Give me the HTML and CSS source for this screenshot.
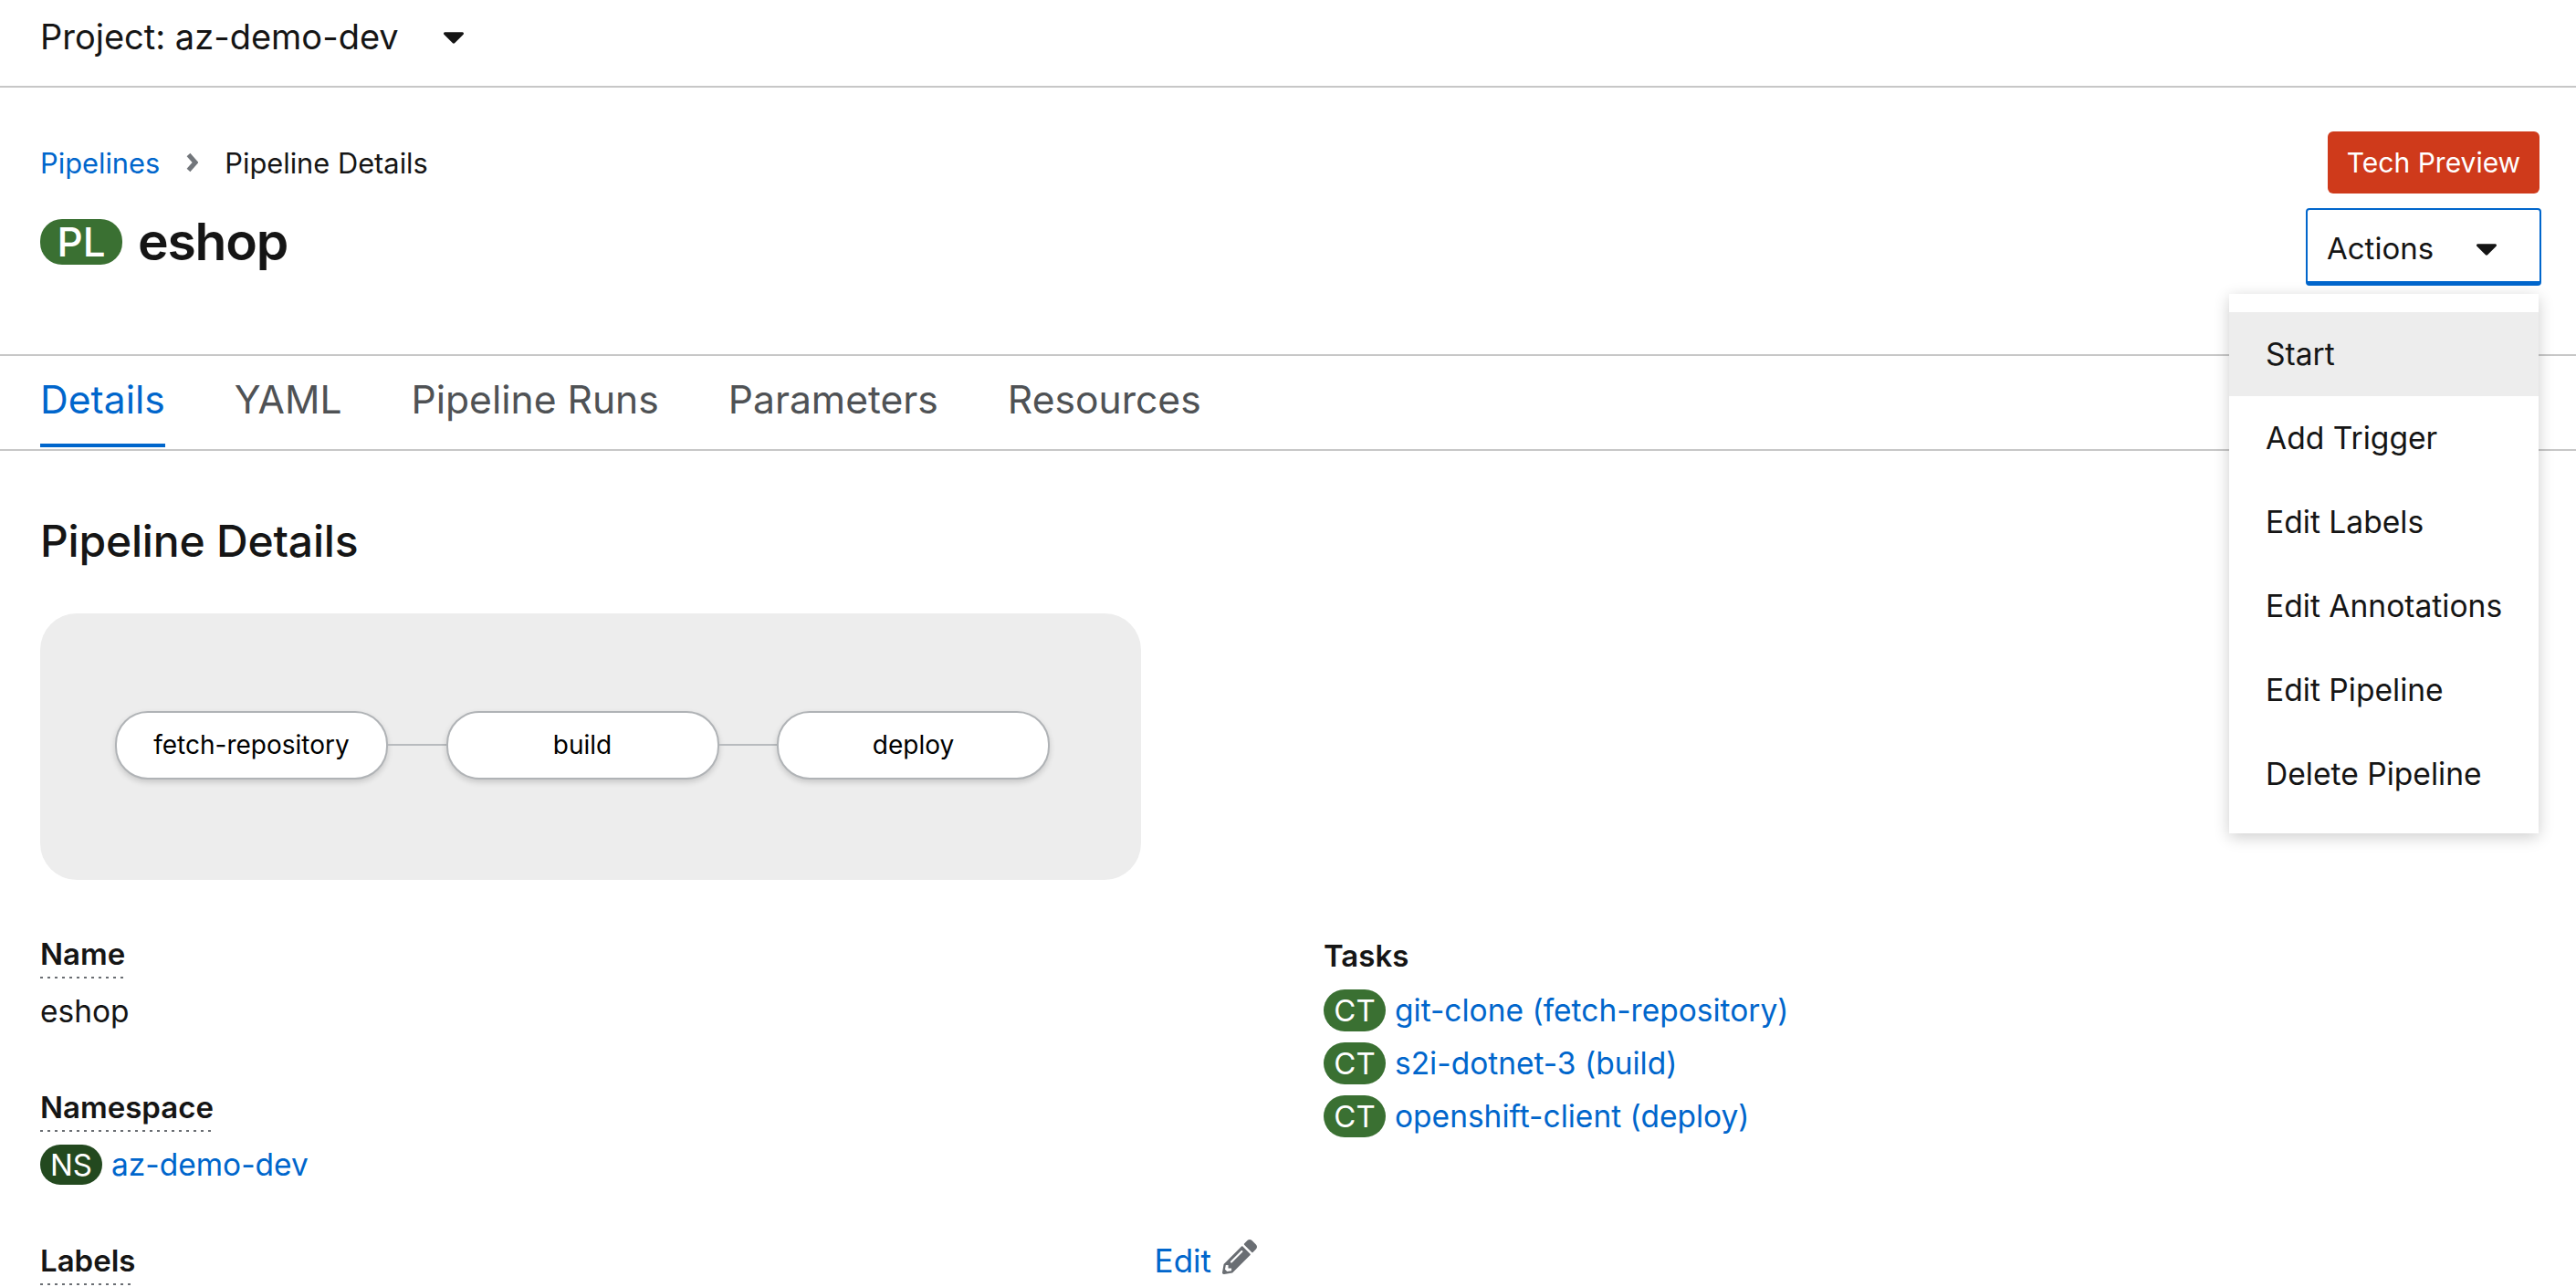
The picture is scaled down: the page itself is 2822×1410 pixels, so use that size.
FILE: index.html
```html
<!DOCTYPE html>
<html lang="en">
<head>
    <meta charset="UTF-8">
    <title>Pipeline Details</title>
    <link rel="stylesheet" href="styles.css">
</head>
<body>
    <div class="project-bar">
        <span>Project: az-demo-dev</span>
        <svg class="caret" viewBox="0 0 320 512"><path d="M31.3 192h257.3c17.8 0 26.7 21.5 14.1 34.1L174.1 354.8c-7.8 7.8-20.5 7.8-28.3 0L17.2 226.1C4.6 213.5 13.5 192 31.3 192z"/></svg>
    </div>

    <div class="page-head">
        <div class="head-left">
            <div class="breadcrumb">
                <a href="#">Pipelines</a>
                <svg class="crumb-arrow" viewBox="0 0 13 22"><path d="M2.5 2.5 10 11l-7.500 8.500" /></svg>
                <span>Pipeline Details</span>
            </div>
            <h1 class="title"><span class="badge badge-pl">PL</span>eshop</h1>
        </div>
        <div class="head-right">
            <span class="tech-preview">Tech Preview</span>
            <button class="actions">
                <span>Actions</span>
                <svg class="caret" viewBox="0 0 320 512"><path d="M31.3 192h257.3c17.8 0 26.7 21.5 14.1 34.1L174.1 354.8c-7.8 7.8-20.5 7.8-28.3 0L17.2 226.1C4.6 213.5 13.5 192 31.3 192z"/></svg>
            </button>
        </div>
    </div>

    <div class="menu">
        <a class="menu-item active" href="#">Start</a>
        <a class="menu-item" href="#">Add Trigger</a>
        <a class="menu-item" href="#">Edit Labels</a>
        <a class="menu-item" href="#">Edit Annotations</a>
        <a class="menu-item" href="#">Edit Pipeline</a>
        <a class="menu-item" href="#">Delete Pipeline</a>
    </div>

    <div class="tabs">
        <a class="tab active" href="#">Details</a>
        <a class="tab" href="#">YAML</a>
        <a class="tab" href="#">Pipeline Runs</a>
        <a class="tab" href="#">Parameters</a>
        <a class="tab" href="#">Resources</a>
    </div>

    <div class="content">
        <h2 class="section-title">Pipeline Details</h2>

        <div class="graph">
            <div class="node">fetch-repository</div>
            <div class="edge"></div>
            <div class="node">build</div>
            <div class="edge"></div>
            <div class="node">deploy</div>
        </div>

        <div class="details">
            <div class="col-left">
                <div class="field">
                    <div class="label"><span class="dotted">Name</span></div>
                    <div class="value">eshop</div>
                </div>
                <div class="field">
                    <div class="label"><span class="dotted">Namespace</span></div>
                    <div class="res-row ns-row"><span class="badge badge-ns">NS</span><a href="#">az-demo-dev</a></div>
                </div>
                <div class="labels-row">
                    <div class="label"><span class="dotted">Labels</span></div>
                    <a class="edit" href="#">Edit
                        <svg class="pencil" viewBox="0 0 512 512"><path d="M497.9 142.1l-46.1 46.1c-4.7 4.7-12.3 4.7-17 0l-111-111c-4.7-4.7-4.7-12.3 0-17l46.1-46.1c18.7-18.7 49.1-18.7 67.9 0l60.1 60.1c18.8 18.7 18.8 49.1 0 67.9zM284.2 99.8L21.6 362.4.4 483.9c-2.9 16.4 11.4 30.6 27.8 27.8l121.5-21.3 262.6-262.6c4.7-4.7 4.7-12.3 0-17l-111-111c-4.8-4.7-12.4-4.7-17.1 0zM124.1 339.9c-5.500-5.500-5.500-14.3 0-19.8l154-154c5.500-5.500 14.3-5.500 19.8 0s5.500 14.3 0 19.8l-154 154c-5.500 5.500-14.3 5.500-19.8 0zM88 424h48v36.3l-64.500 11.3-31.100-31.100L51.700 376H88v48z"/></svg>
                    </a>
                </div>
            </div>
            <div class="col-right">
                <div class="label tasks-label">Tasks</div>
                <div class="res-row"><span class="badge badge-ct">CT</span><a href="#">git-clone (fetch-repository)</a></div>
                <div class="res-row"><span class="badge badge-ct">CT</span><a href="#">s2i-dotnet-3 (build)</a></div>
                <div class="res-row"><span class="badge badge-ct">CT</span><a href="#">openshift-client (deploy)</a></div>
            </div>
        </div>
    </div>
</body>
</html>
```

FILE: styles.css
```css
html, body {
    margin: 0;
    height: 1410px;
    overflow: hidden;
}
body {
    position: relative;
    background: #fff;
    color: #151515;
    font-family: Inter, "Open Sans", sans-serif;
    font-size: 33.5px;
}
a {
    color: #06c;
    text-decoration: none;
}
.caret {
    width: 24px;
    height: 38px;
    fill: #151515;
}
.project-bar {
    display: flex;
    align-items: center;
    gap: 48px;
    box-sizing: border-box;
    height: 96px;
    padding: 0 0 14px 44px;
    border-bottom: 2px solid #c7c7c7;
    font-size: 38px;
}
.page-head {
    display: flex;
    justify-content: space-between;
    box-sizing: border-box;
    height: 294px;
    padding: 48px 38px 0 44px;
    border-bottom: 2px solid #c7c7c7;
}
.breadcrumb {
    display: flex;
    align-items: center;
    gap: 29px;
    height: 68px;
    font-size: 30.8px;
}
.crumb-arrow {
    width: 13px;
    height: 22px;
    fill: none;
    stroke: #72767b;
    stroke-width: 5;
}
.title {
    display: flex;
    align-items: center;
    gap: 17px;
    margin: 28px 0 0;
    font-size: 57px;
    font-weight: 600;
    line-height: 50px;
    letter-spacing: -1.2px;
}
.badge {
    display: inline-flex;
    align-items: center;
    justify-content: center;
    border-radius: 24px;
    color: #fff;
    font-size: 33px;
    font-weight: 400;
    letter-spacing: 0;
}
.badge-pl {
    width: 90px;
    height: 50px;
    background: #3a7032;
    font-size: 44px;
    font-weight: 500;
}
.badge-ns {
    width: 68px;
    height: 44px;
    background: #23491f;
}
.badge-ct {
    width: 68px;
    height: 46px;
    background: #3a7032;
}
.head-right {
    display: flex;
    flex-direction: column;
    align-items: flex-end;
    gap: 16px;
}
.tech-preview {
    display: flex;
    align-items: center;
    justify-content: center;
    width: 232px;
    height: 68px;
    margin-right: 2px;
    border-radius: 6px;
    background: #cf3a1b;
    color: #fff;
    font-size: 30px;
}
.actions {
    display: flex;
    align-items: center;
    justify-content: space-between;
    box-sizing: border-box;
    width: 258px;
    height: 85px;
    padding: 5px 46px 0 21px;
    border: 2px solid #06c;
    border-bottom-width: 5px;
    border-radius: 4px;
    background: #fff;
    color: #151515;
    font: inherit;
    font-size: 33px;
}
.menu {
    position: absolute;
    top: 322px;
    left: 2442px;
    box-sizing: border-box;
    width: 339px;
    padding: 20px 0 19px;
    background: #fff;
    box-shadow: 0 4px 16px rgba(3, 3, 3, .2);
}
.menu-item {
    display: flex;
    align-items: center;
    box-sizing: border-box;
    height: 92px;
    padding: 0 0 2px 40px;
    color: #151515;
    font-size: 33.6px;
}
.menu-item.active {
    background: #ededed;
}
.tabs {
    display: flex;
    gap: 76px;
    box-sizing: border-box;
    height: 104px;
    padding-left: 44px;
    border-bottom: 2px solid #c7c7c7;
    font-size: 42.6px;
}
.tab {
    display: flex;
    align-items: center;
    height: 100px;
    box-sizing: border-box;
    padding-bottom: 6px;
    color: #4f5255;
}
.tab.active {
    padding-bottom: 2px;
    border-bottom: 4px solid #06c;
    color: #06c;
}
.content {
    padding: 0 44px;
}
.section-title {
    margin: 66px 0 46px;
    font-size: 48px;
    font-weight: 500;
    line-height: 66px;
    letter-spacing: -.2px;
}
.graph {
    display: flex;
    align-items: center;
    box-sizing: border-box;
    width: 1206px;
    height: 292px;
    padding: 0 0 4px 82px;
    border-radius: 40px;
    background: #ededed;
}
.node {
    display: flex;
    align-items: center;
    justify-content: center;
    box-sizing: border-box;
    width: 299px;
    height: 75px;
    border: 2px solid #b0b3b6;
    border-radius: 36px;
    background: #fff;
    box-shadow: 0 3px 6px rgba(3, 3, 3, .16);
    color: #000;
    font-size: 28px;
}
.edge {
    width: 63.5px;
    height: 2px;
    background: #b8bbbe;
}
.details {
    display: grid;
    grid-template-columns: 1333px 1fr;
    gap: 73px;
    margin-top: 58px;
}
.label {
    font-size: 33px;
    font-weight: 600;
    line-height: 46px;
}
.dotted {
    display: inline-block;
    padding-bottom: 4px;
    background: linear-gradient(to right, #6a6e73 3px, transparent 3px) 0 100% / 8px 2px repeat-x;
}
.value {
    margin-top: 12px;
    line-height: 48px;
}
.field {
    height: 168px;
}
.labels-row {
    display: flex;
    justify-content: space-between;
}
.edit {
    display: flex;
    align-items: flex-start;
    gap: 12px;
    font-size: 35px;
    line-height: 46px;
}
.pencil {
    width: 38px;
    height: 38px;
    fill: #6a6e73;
}
.res-row {
    display: flex;
    align-items: center;
    gap: 10px;
    height: 58px;
}
.ns-row {
    margin-top: 7px;
}
.tasks-label {
    margin: 2px 0 8px;
}
```
